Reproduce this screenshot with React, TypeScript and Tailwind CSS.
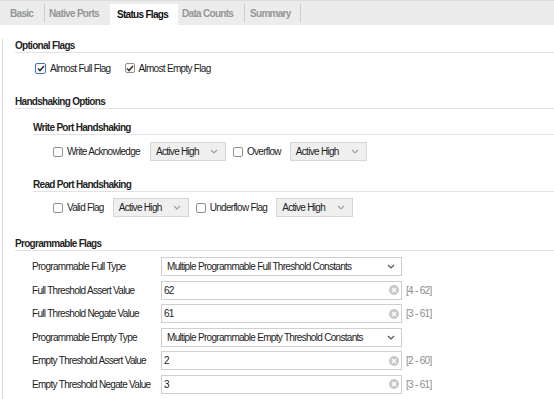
import React from 'react';

const Check = ({ checked, focus }: { checked?: boolean; focus?: boolean }) => (
  <span
    className={`flex items-center justify-center shrink-0 rounded-[2px] bg-white ${
      focus ? 'w-[11px] h-[11px] border-[1.5px] border-[#3f74cf]' : 'w-[10px] h-[10px] border border-[#8f8f8f]'
    }`}
  >
    {checked && (
      <svg width="8" height="7" viewBox="0 0 8 7">
        <polyline points="1,3.5 3,5.5 7,1" fill="none" stroke="#333" strokeWidth="1.6" />
      </svg>
    )}
  </span>
);

const Chevron = ({ color }: { color: string }) => (
  <svg width="8" height="5" viewBox="0 0 8 5">
    <polyline points="1,1 4,4 7,1" fill="none" stroke={color} strokeWidth="1.2" />
  </svg>
);

const ClearIcon = () => (
  <svg width="10" height="10" viewBox="0 0 10 10">
    <circle cx="5" cy="5" r="5" fill="#c8c8c8" />
    <path d="M3 3 L7 7 M7 3 L3 7" stroke="#fff" strokeWidth="1.4" />
  </svg>
);

const Heading = ({ children, className = '' }: { children: React.ReactNode; className?: string }) => (
  <div className={`font-bold text-[#1f1f1f] leading-[13px] border-b border-[#e2e2e2] ${className}`}>{children}</div>
);

const MiniSelect = ({ w }: { w: string }) => (
  <div className={`flex items-center justify-between h-[19px] ${w} bg-[#efefef] border border-[#d6d6d6] pl-[5px] pr-[7px]`}>
    <span>Active High</span>
    <Chevron color="#a0a0a0" />
  </div>
);

const CheckLabel = ({ label }: { label: string }) => (
  <div className="flex items-center gap-[4px]">
    <Check />
    <span>{label}</span>
  </div>
);

const rows = [
  { label: 'Programmable Full Type', select: 'Multiple Programmable Full Threshold Constants' },
  { label: 'Full Threshold Assert Value', value: '62', range: '[4 - 62]' },
  { label: 'Full Threshold Negate Value', value: '61', range: '[3 - 61]' },
  { label: 'Programmable Empty Type', select: 'Multiple Programmable Empty Threshold Constants' },
  { label: 'Empty Threshold Assert Value', value: '2', range: '[2 - 60]' },
  { label: 'Empty Threshold Negate Value', value: '3', range: '[3 - 61]' },
];

const tabs = [
  { name: 'Basic', w: 'w-[41px]', pl: 'pl-[7px]' },
  { name: 'Native Ports', w: 'w-[65px]', pl: 'pl-[4px]' },
  { name: 'Status Flags', w: 'w-[68px]', pl: 'pl-[7px]', active: true },
  { name: 'Data Counts', w: 'w-[66px]', pl: 'pl-[4px]' },
  { name: 'Summary', w: 'w-[55px]', pl: 'pl-[5px]' },
];

export default function App() {
  return (
    <div className="w-[554px] h-[399px] overflow-hidden bg-white text-[10px] tracking-[-0.7px] text-[#222] font-['Liberation_Sans',Arial,sans-serif]">
      {/* tab strip */}
      <div className="flex h-[25px] bg-[#ececec] border-t border-[#dedede] pl-[3px]">
        {tabs.map((t, i) => (
          <React.Fragment key={t.name}>
            {t.active ? (
              <div className={`flex items-center mt-[3px] bg-white font-bold text-[#111] ${t.w} ${t.pl}`}>{t.name}</div>
            ) : (
              <div className={`flex items-center font-bold text-[#969696] ${t.w} ${t.pl}`}>{t.name}</div>
            )}
            {!t.active && !tabs[i + 1]?.active && <div className="w-px h-[18px] self-center bg-[#cdcdcd]" />}
          </React.Fragment>
        ))}
      </div>

      <div className="ml-[2px] h-full border-l border-[#d9d9d9] pl-[12px]">
        <Heading className="mt-[14px]">Optional Flags</Heading>
        <div className="flex items-center h-[14px] mt-[8px] ml-[20px]">
          <Check checked focus />
          <span className="ml-[4px]">Almost Full Flag</span>
          <span className="ml-[14px]">
            <Check checked />
          </span>
          <span className="ml-[4px]">Almost Empty Flag</span>
        </div>

        <Heading className="mt-[20px]">Handshaking Options</Heading>
        <div className="ml-[18px]">
          <Heading className="mt-[12px]">Write Port Handshaking</Heading>
          <div className="flex items-center h-[19px] mt-[7px] ml-[20px]">
            <CheckLabel label="Write Acknowledge" />
            <div className="ml-[10px]">
              <MiniSelect w="w-[76px]" />
            </div>
            <div className="ml-[7px]">
              <CheckLabel label="Overflow" />
            </div>
            <div className="ml-[9px]">
              <MiniSelect w="w-[77px]" />
            </div>
          </div>

          <Heading className="mt-[17px]">Read Port Handshaking</Heading>
          <div className="flex items-center h-[19px] mt-[6px] ml-[20px]">
            <CheckLabel label="Valid Flag" />
            <div className="ml-[9px]">
              <MiniSelect w="w-[76px]" />
            </div>
            <div className="ml-[7px]">
              <CheckLabel label="Underflow Flag" />
            </div>
            <div className="ml-[9px]">
              <MiniSelect w="w-[77px]" />
            </div>
          </div>
        </div>

        <Heading className="mt-[20px]">Programmable Flags</Heading>
        <div className="flex flex-col gap-[4.5px] mt-[6px] ml-[17px]">
          {rows.map((r) => (
            <div key={r.label} className="flex items-center h-[19px]">
              <span className="w-[129px] shrink-0">{r.label}</span>
              {r.select ? (
                <div className="flex items-center justify-between h-[19px] w-[241px] border border-[#cfcfcf] bg-white pl-[5px] pr-[6px]">
                  <span>{r.select}</span>
                  <Chevron color="#555" />
                </div>
              ) : (
                <>
                  <div className="flex items-center justify-between h-[19px] w-[241px] border border-[#cfcfcf] bg-white pl-[2px] pr-[2px]">
                    <span>{r.value}</span>
                    <ClearIcon />
                  </div>
                  <span className="ml-[4px] text-[#8c8c8c]">{r.range}</span>
                </>
              )}
            </div>
          ))}
        </div>
      </div>
    </div>
  );
}
